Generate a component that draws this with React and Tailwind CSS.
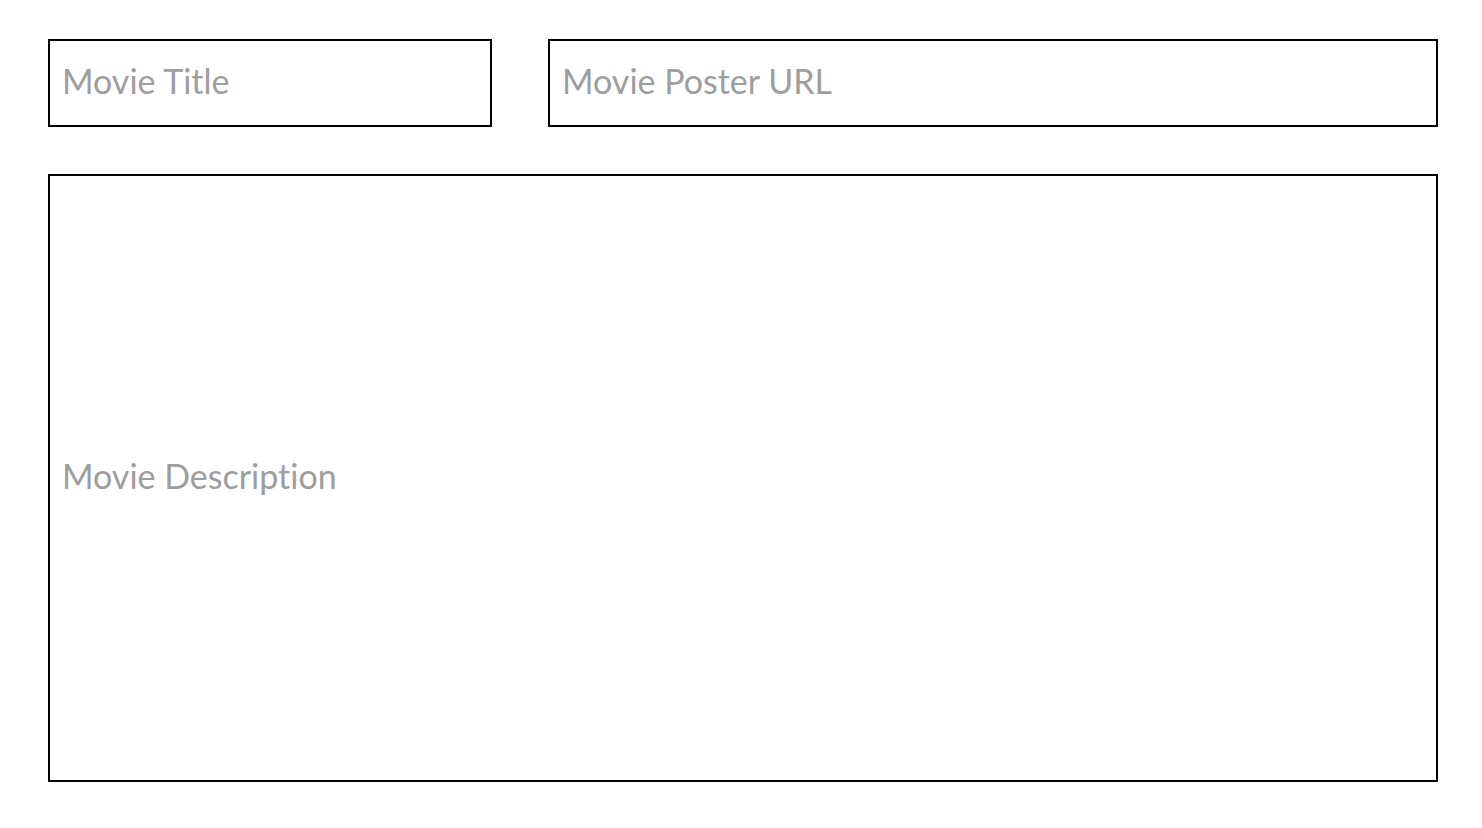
export default function App() {
  const font = { fontFamily: "Lato, 'Open Sans', sans-serif" };
  return (
    <div className="w-[1482px] h-[828px] bg-white pl-[48px] pt-[39px]" style={font}>
      <div className="flex gap-[56px] w-[1390px]">
        <div className="w-[444px] h-[88px] border-2 border-black flex items-center pl-[12px] pb-[4px]">
          <span className="text-[34px] text-[#9e9e9e] leading-none [font-variant-ligatures:none]">Movie Title</span>
        </div>
        <div className="w-[890px] h-[88px] border-2 border-black flex items-center pl-[12px] pb-[4px]">
          <span className="text-[34px] text-[#9e9e9e] leading-none [font-variant-ligatures:none]">Movie Poster URL</span>
        </div>
      </div>
      <div className="mt-[47px] w-[1390px] h-[608px] border-2 border-black flex items-center pl-[12px] pb-[4px]">
        <span className="text-[34px] text-[#9e9e9e] leading-none [font-variant-ligatures:none]">Movie Description</span>
      </div>
    </div>
  );
}
